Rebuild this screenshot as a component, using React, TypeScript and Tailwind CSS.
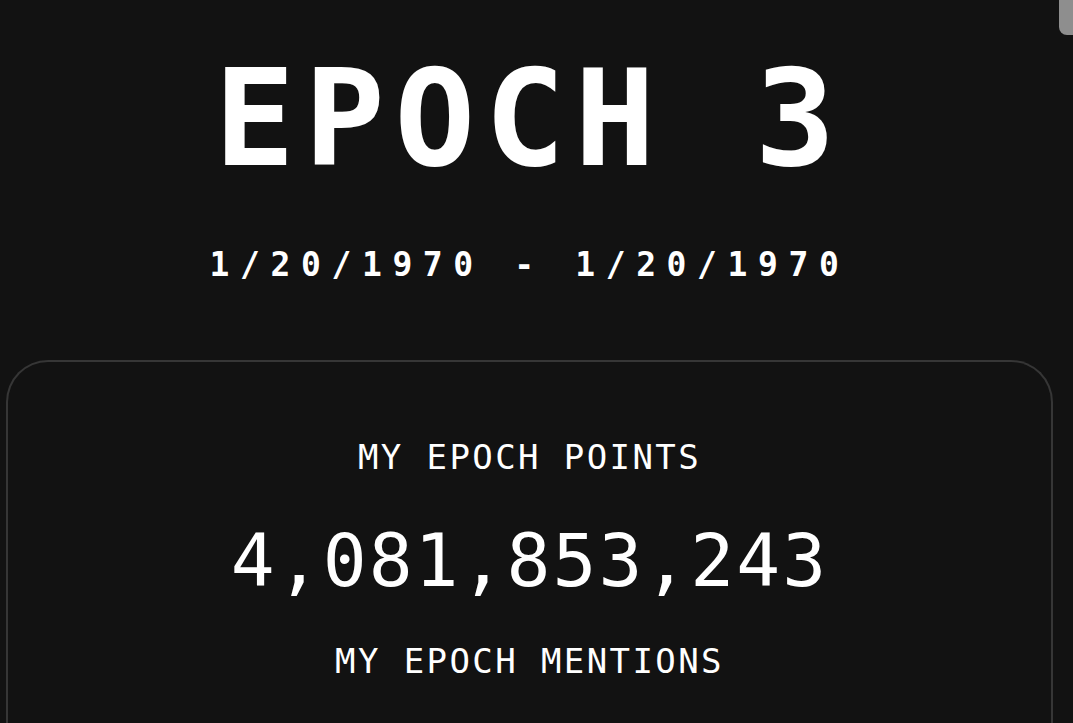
import { FC } from "react";

interface StatBlockProps {
  label: string;
  value?: string;
}

const StatBlock: FC<StatBlockProps> = ({ label, value }) => {
  return (
    <div className="flex flex-col items-center">
      <p className="text-[34px] leading-none tracking-[2.4px] text-white">
        {label}
      </p>
      {value && (
        <p className="mt-[50px] text-[73px] leading-none tracking-[2px] text-white">
          {value}
        </p>
      )}
    </div>
  );
};

const App: FC = () => {
  return (
    <div className="relative h-screen overflow-hidden bg-[#121212] pr-[14px] font-['DejaVu_Sans_Mono',monospace] text-white">
      {/* scrollbar thumb */}
      <div className="absolute right-0 top-0 h-[35px] w-[14px] rounded-bl-[8px] bg-[#8e8e8e]" />

      <div className="flex h-full flex-col items-center px-[6px]">
        <h1 className="pt-[52px] text-[134px] font-bold leading-none tracking-[0.07em]">
          EPOCH 3
        </h1>
        <p className="mt-[62px] text-[33px] font-bold leading-none tracking-[10.6px]">
          1/20/1970 - 1/20/1970
        </p>

        <div className="mt-[79px] flex w-full flex-1 flex-col items-center rounded-t-[42px] border-2 border-b-0 border-[#363636] pt-[78px]">
          <StatBlock label="MY EPOCH POINTS" value="4,081,853,243" />
          <div className="mt-[47px]">
            <StatBlock label="MY EPOCH MENTIONS" />
          </div>
        </div>
      </div>
    </div>
  );
};

export default App;
